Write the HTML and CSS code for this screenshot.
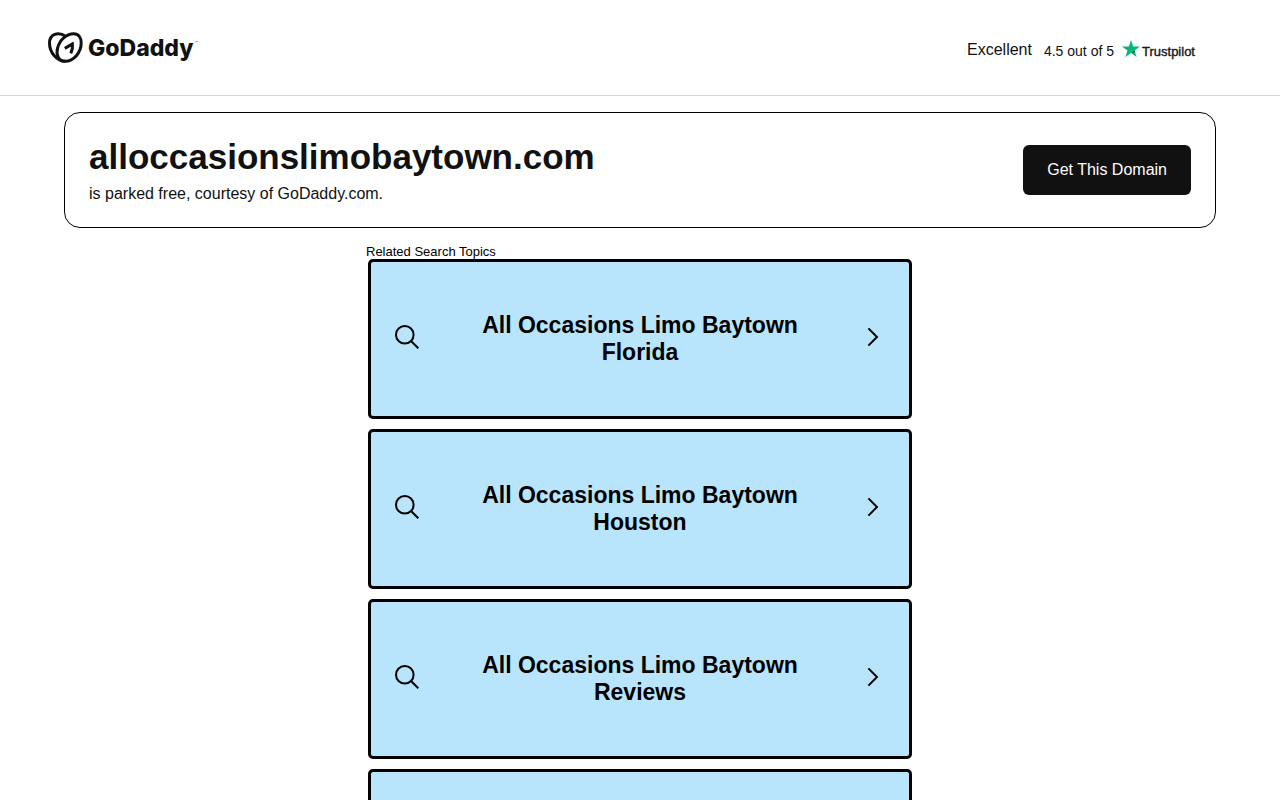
FILE: index.html
```html
<!DOCTYPE html>
<html lang="en">
  <head>
    <meta charset="UTF-8" />
    <meta name="viewport" content="width=device-width, initial-scale=1" />
    <title>alloccasionslimobaytown.com</title>
    <link rel="stylesheet" href="styles.css">
  </head>

  <body>
    <svg class="sprite" aria-hidden="true">
      <symbol id="icon-search" viewBox="0 0 24 24">
        <circle cx="9.8" cy="9.8" r="8.8" />
        <path d="M16 16l7.3 7.3" />
      </symbol>
      <symbol id="icon-chevron" viewBox="0 0 24 24">
        <path d="M7.4 3.4L16 12l-8.6 8.6" />
      </symbol>
    </svg>

    <header class="header">
      <a href="#" class="logo" aria-label="GoDaddy">
        <svg width="150" height="32" viewBox="0 0 150 32">
          <g fill="none" stroke="#111" stroke-width="3">
            <path d="M17.3 29.3C9 29.3 1.5 20.5 1.5 11.2C1.5 2 10 -0.8 18 4.4" />
            <path d="M17.3 29.3C10.4 29.3 7.8 22.5 9.6 16C11.8 7.6 19 1.7 25.6 1.7C30.6 1.7 33.2 5.7 33.2 11C33.2 20.5 25.6 29.3 17.3 29.3Z" />
            <path d="M16.8 16.4L24.4 12C24.9 15.2 24.4 18.2 22.8 21.4" />
          </g>
          <text class="logo-text" x="40" y="24">GoDaddy</text>
          <text class="logo-mark" x="147" y="11">™</text>
        </svg>
      </a>
      <div class="rating">
        <span class="rating-label">Excellent</span>
        <span class="rating-score">4.5 out of 5</span>
        <a href="#" class="trustpilot" aria-label="Trustpilot">
          <svg width="76" height="20" viewBox="0 0 76 20">
            <path fill="#00b67a" d="M9 0l2.2 6.5H18l-5.5 4 2.1 6.5L9 13l-5.6 4 2.1-6.5L0 6.5h6.8z" />
            <path fill="#005128" d="M13 12l-.5-1.5L9 13z" />
            <text class="trustpilot-text" x="20" y="16">Trustpilot</text>
          </svg>
        </a>
      </div>
    </header>

    <section class="banner">
      <div>
        <h1>alloccasionslimobaytown.com</h1>
        <p>is parked free, courtesy of GoDaddy.com.</p>
      </div>
      <button type="button" class="get-domain">Get This Domain</button>
    </section>

    <main class="topics">
      <div class="topics-label">Related Search Topics</div>
      <a href="#" class="topic">
        <svg class="icon"><use href="#icon-search" /></svg>
        <span class="topic-title">All Occasions Limo Baytown Florida</span>
        <svg class="icon"><use href="#icon-chevron" /></svg>
      </a>
      <a href="#" class="topic">
        <svg class="icon"><use href="#icon-search" /></svg>
        <span class="topic-title">All Occasions Limo Baytown Houston</span>
        <svg class="icon"><use href="#icon-chevron" /></svg>
      </a>
      <a href="#" class="topic">
        <svg class="icon"><use href="#icon-search" /></svg>
        <span class="topic-title">All Occasions Limo Baytown Reviews</span>
        <svg class="icon"><use href="#icon-chevron" /></svg>
      </a>
      <a href="#" class="topic" aria-label="More topics"></a>
    </main>
  </body>
</html>
```

FILE: styles.css
```css
*,
*:before,
*:after {
  box-sizing: border-box;
}

html {
  scrollbar-width: none;
}

body {
  margin: 0;
  color: #111;
  background: #fff;
  font-family: "Liberation Sans", Arial, sans-serif;
  font-size: 16px;
}

.sprite {
  display: none;
}

.header {
  display: flex;
  align-items: center;
  justify-content: space-between;
  height: 96px;
  padding: 0 82px 0 48px;
  border-bottom: 1px solid #d3d3d3;
}

.logo svg,
.trustpilot svg {
  display: block;
  overflow: visible;
}

.logo-text {
  font-family: Inter, sans-serif;
  font-size: 23px;
  font-weight: 800;
  fill: #111;
}

.logo-mark {
  font-size: 3px;
  fill: #111;
}

.rating {
  display: flex;
  align-items: center;
  padding-top: 4px;
}

.rating-label {
  margin-right: 12px;
}

.rating-score {
  margin-right: 8px;
  padding-top: 2px;
  font-size: 14px;
}

.trustpilot-text {
  font-size: 13px;
  fill: #191919;
  stroke: #191919;
  stroke-width: 0.4;
}

.banner {
  display: flex;
  align-items: center;
  justify-content: space-between;
  margin: 16px 5% 0;
  padding: 24px;
  border: 1px solid #000;
  border-radius: 16px;
}

.banner h1 {
  margin: 0 0 8px;
  font-size: 35px;
  line-height: 40px;
}

.banner p {
  margin: 0;
  line-height: 18px;
}

.get-domain {
  padding: 16px 24px;
  border: none;
  border-radius: 6px;
  color: #fff;
  background: #111;
  font-family: inherit;
  font-size: 16px;
  cursor: pointer;
}

.topics {
  max-width: 548px;
  margin: 16px auto 0;
}

.topics-label {
  color: #000;
  font-size: 13px;
  line-height: 15px;
}

.topic {
  display: flex;
  align-items: center;
  min-height: 160px;
  margin: 0 2px 10px;
  padding: 0 24px;
  border: 3px solid #000;
  border-radius: 5px;
  color: #000;
  background: #b8e5fc;
  text-decoration: none;
}

.topic-title {
  flex: 1;
  padding: 0 32px;
  font-size: 23px;
  font-weight: bold;
  line-height: 27px;
  text-align: center;
}

.icon {
  flex: none;
  width: 24px;
  height: 24px;
  margin-bottom: 4px;
  fill: none;
  stroke: #000;
  stroke-width: 2;
}
```
